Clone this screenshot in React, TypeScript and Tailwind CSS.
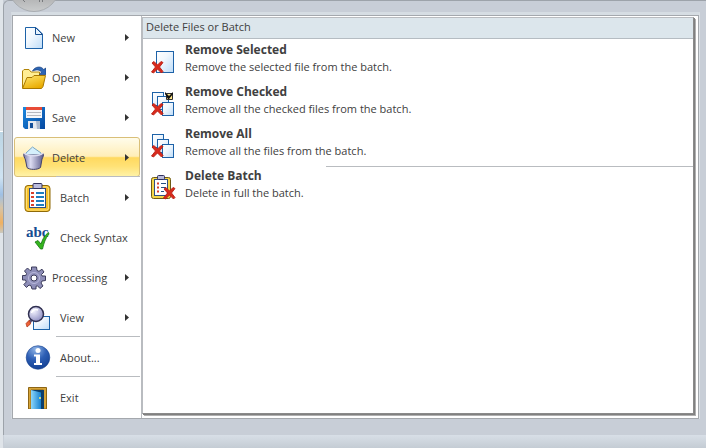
import { ReactNode } from "react";

function Sheet({ x, y, w, h }: { x: number; y: number; w: number; h: number }) {
  return <rect x={x + 0.5} y={y + 0.5} width={w - 1} height={h - 1} fill="url(#paper)" stroke="#1d62a8" />;
}

function Cross({ x, y }: { x: number; y: number }) {
  return (
    <g transform={`translate(${x} ${y})`}>
      <path d="M1 2L3 0.500L6.500 4L10 0.500L12 1.500L8.500 6L12 10.500L10.500 12L6.500 8L2.500 12L0.500 11L4.500 6Z" fill="#d92a1c" stroke="#b81f14" strokeWidth="0.9" />
    </g>
  );
}

function Defs() {
  return (
    <svg className="absolute size-0" aria-hidden="true">
      <defs>
        <linearGradient id="paper" x1="0" y1="0" x2="1" y2="1">
          <stop offset="0" stopColor="#fff" />
          <stop offset="0.4" stopColor="#f2f8fe" />
          <stop offset="1" stopColor="#bddcf8" />
        </linearGradient>
        <linearGradient id="folder" x1="0" y1="0" x2="0.6" y2="1">
          <stop offset="0" stopColor="#ffe873" />
          <stop offset="1" stopColor="#e9ab00" />
        </linearGradient>
        <linearGradient id="disk" x1="0" y1="0" x2="1" y2="1">
          <stop offset="0" stopColor="#1c8ae0" />
          <stop offset="1" stopColor="#0648a0" />
        </linearGradient>
        <linearGradient id="steel" x1="0" y1="0" x2="1" y2="0">
          <stop offset="0" stopColor="#7b7ba6" />
          <stop offset="0.35" stopColor="#dcdcf2" />
          <stop offset="1" stopColor="#5c5c8c" />
        </linearGradient>
        <linearGradient id="door" x1="0" y1="0" x2="1" y2="0">
          <stop offset="0" stopColor="#8bd6fb" />
          <stop offset="1" stopColor="#1680cf" />
        </linearGradient>
        <radialGradient id="info" cx="0.4" cy="0.15" r="0.9">
          <stop offset="0" stopColor="#8fb4e6" />
          <stop offset="0.5" stopColor="#2e5fb5" />
          <stop offset="1" stopColor="#123f91" />
        </radialGradient>
        <radialGradient id="lens" cx="0.35" cy="0.3" r="0.8">
          <stop offset="0" stopColor="#f4f4ff" />
          <stop offset="1" stopColor="#8686bd" />
        </radialGradient>
        <linearGradient id="orb" x1="0" y1="0" x2="0" y2="1">
          <stop offset="0.75" stopColor="#b4b5b6" />
          <stop offset="1" stopColor="#cacccd" />
        </linearGradient>
      </defs>
    </svg>
  );
}

function Clipboard() {
  return (
    <>
      <rect x="1" y="2.500" width="25" height="26" rx="3" fill="#f6c02a" stroke="#8f6a08" />
      <rect x="2.500" y="4" width="22" height="23" rx="2" fill="none" stroke="#ffe27a" />
      <rect x="5.500" y="5.500" width="16" height="19" fill="#fff" stroke="#304f82" />
      <rect x="9" y="0.500" width="9" height="5" rx="1" fill="#b9bbdc" stroke="#31315c" />
      <path d="M7 10h3M7 14h3M7 18h3M7 22h3" stroke="#d9402c" strokeWidth="2" />
      <path d="M12 10h8M12 14h8M12 18h8M12 22h8" stroke="#1e7fc0" strokeWidth="2" />
    </>
  );
}

function SmallClipboard() {
  return (
    <>
      <rect x="0.500" y="2.500" width="19" height="21" rx="2" fill="#f4d548" stroke="#6e5a14" />
      <rect x="3.500" y="4.500" width="13" height="16" fill="#fff" stroke="#304f82" />
      <rect x="6.500" y="0.500" width="7" height="4" rx="1" fill="#b9bbdc" stroke="#31315c" />
      <path d="M6 8.500h2M6 12.500h2M6 16.500h2" stroke="#d9402c" strokeWidth="2" />
      <path d="M10 8.500h5M10 12.500h5M10 16.500h3" stroke="#24507f" />
    </>
  );
}

const icons: Record<string, ReactNode> = {
  New: (
    <svg width="24" height="24" viewBox="0 0 24 24">
      <path d="M3.500 1.500H14L20.500 8V22.500H3.500Z" fill="url(#paper)" stroke="#1d62a8" />
      <path d="M13.500 1.500V8.500H20.500Z" fill="#e7f3fd" stroke="#174f92" />
    </svg>
  ),
  Open: (
    <svg width="24" height="24" viewBox="0 0 24 24">
      <path d="M0.500 22V5L2 3.500H7L9 6H17.500V12" fill="#ffee94" stroke="#b18408" />
      <path d="M0.500 22.500L5 11.500H10L12 9.500H23.500L21 20.500L19.500 22.500Z" fill="url(#folder)" stroke="#a87800" />
      <path d="M10.500 5C13 0 20 0 21.500 3.500L24 2V8.500H17.500L19.500 6C17 3.500 14 3.500 10.500 5Z" fill="#2e66b5" stroke="#183f7c" strokeWidth="0.7" />
    </svg>
  ),
  Save: (
    <svg width="24" height="24" viewBox="0 0 24 24">
      <path d="M1 1H23V23H3L1 21Z" fill="url(#disk)" />
      <path d="M4 1H20V12H4Z" fill="#f4f6fa" />
      <path d="M4 1H20V4H4Z" fill="#e84b37" />
      <path d="M5 6.500H19M5 9.500H19" stroke="#b5b8bf" />
      <path d="M6 15H18V23H6Z" fill="#e6e9ef" />
      <path d="M8 17H11V22H8Z" fill="#144f98" />
      <path d="M14 15H18V23H15Z" fill="#aab8cd" />
    </svg>
  ),
  Delete: (
    <svg width="24" height="26" viewBox="0 0 24 26">
      <path d="M4 8L10.500 2L19 8V12H4Z" fill="#d5effc" stroke="#78a6c4" />
      <path d="M2 8.500C1 11 3 13 3.500 15L5 22.500C7 25 16 25 18.500 22.500L20 14C21 12 22 10 21 8.500L18.500 10H5Z" fill="url(#steel)" stroke="#41416c" />
      <path d="M2 8C5 11.500 18 11.500 21 8" fill="none" stroke="#dcdcf1" strokeWidth="1.500" />
    </svg>
  ),
  Batch: (
    <svg width="27" height="30" viewBox="0 0 27 30"><Clipboard /></svg>
  ),
  "Check Syntax": (
    <svg width="28" height="28" viewBox="0 0 28 28">
      <text x="2" y="13" fontFamily="Liberation Serif, serif" fontWeight="bold" fontSize="15" fill="#164b91">abc</text>
      <path d="M11 18L14 16.500L17 20C19 14 21 11 24.500 8.500L25 10C21 15 20 19 18.500 25H16.500Z" fill="#35b51d" stroke="#137411" strokeWidth="0.8" />
    </svg>
  ),
  Processing: (
    <svg width="24" height="24" viewBox="0 0 24 24">
      <path fillRule="evenodd" d="M9.500 1H14.500L15 4.500L17 5.300L20 3.200L22 6L19.500 8.500L20 10H23.500V14.500L20 15L19 17L21 20L18 22.500L15.500 19.800L14 20.300V23H10L9 19.800L7 19L4.500 21.500L1.800 18.500L4.300 16L3.500 14H0.500V9.500H3.800L4.500 7.500L2.500 5L5.500 2L8 4.500L9.500 4ZM12 9A3 3 0 1 0 12 15A3 3 0 1 0 12 9Z" fill="#8e8eb8" stroke="#3d3d5c" />
      <circle cx="12" cy="12" r="5.500" fill="none" stroke="#b9b9dc" />
    </svg>
  ),
  View: (
    <svg width="26" height="26" viewBox="0 0 26 26">
      <Sheet x={8} y={11} w={17} h={14} />
      <path d="M8 13L3 19" stroke="#55557f" strokeWidth="3" />
      <path d="M4.500 15L1 18.500L2 22L5.500 19Z" fill="#ed6036" stroke="#ad3416" strokeWidth="0.7" />
      <circle cx="11" cy="9" r="7.500" fill="url(#lens)" stroke="#2f2f50" strokeWidth="1.500" />
      <path d="M6.500 8C7 5 10 4 13 5" stroke="#fff" strokeWidth="1.500" fill="none" />
    </svg>
  ),
  "About...": (
    <svg width="26" height="26" viewBox="0 0 26 26">
      <circle cx="13" cy="12.500" r="11.800" fill="url(#info)" stroke="#14408e" strokeWidth="0.6" />
      <circle cx="13" cy="5.500" r="2.500" fill="#fff" />
      <path d="M9 9.500H15V18H17V20H9V18H11V11.500H9Z" fill="#fff" />
    </svg>
  ),
  Exit: (
    <svg width="20" height="22" viewBox="0 0 20 22">
      <path d="M0.500 22V0.500H18.500V22H15.500V3H3V22Z" fill="#d6a438" stroke="#8d6515" />
      <path d="M3 3H16V22H3Z" fill="#0c3e6b" />
      <path d="M3 3L13 5.500V22H3Z" fill="url(#door)" />
      <circle cx="12" cy="11" r="1" fill="#fff36b" />
    </svg>
  ),
};

type Row = { label: string; sub?: boolean; wide?: boolean; ruled?: boolean; active?: boolean };

const rows: Row[] = [
  { label: "New", sub: true },
  { label: "Open", sub: true },
  { label: "Save", sub: true },
  { label: "Delete", sub: true, active: true },
  { label: "Batch", sub: true, wide: true, ruled: true },
  { label: "Check Syntax", wide: true },
  { label: "Processing", sub: true },
  { label: "View", sub: true, wide: true },
  { label: "About...", wide: true, ruled: true },
  { label: "Exit", wide: true, ruled: true },
];

function MenuRow({ label, sub, wide, ruled, active }: Row) {
  return (
    <li className="relative">
      {ruled && <span className="absolute -top-px right-0 left-[42px] h-px bg-[#b9bcc0]" />}
      <button
        type="button"
        className={
          "flex h-10 w-full items-center rounded-[3px] border pt-px pr-[10px] text-left " +
          (active
            ? "border-[#d9bf78] bg-[linear-gradient(#fffceb,#ffeeb8_48%,#ffd95f_52%,#ffe277_75%,#fff2a6)]"
            : "border-transparent")
        }
      >
        <span className={"flex shrink-0 items-center justify-center " + (wide ? "w-[45px]" : "w-[37px]")}>
          {icons[label]}
        </span>
        <span className="grow whitespace-nowrap">{label}</span>
        {sub && (
          <svg width="4" height="7" viewBox="0 0 4 7" className="shrink-0">
            <path d="M0 0L4 3.500L0 7Z" fill="#333" />
          </svg>
        )}
      </button>
    </li>
  );
}

const actions = [
  {
    title: "Remove Selected",
    text: "Remove the selected file from the batch.",
    art: (<><Sheet x={5} y={2} w={18} h={22} /><Cross x={0} y={12} /></>),
  },
  {
    title: "Remove Checked",
    text: "Remove all the checked files from the batch.",
    art: (
      <>
        <Sheet x={1} y={1} w={12} h={14} /><Sheet x={6} y={5} w={12} h={14} /><Sheet x={11} y={11} w={12} h={14} />
        <path d="M15.500 2.500H21.500V8.500H15.500Z" fill="#ffe789" stroke="#303030" />
        <path d="M14 1L18 5L22 1V3L18 8H17L14 3Z" fill="#111" />
        <Cross x={0} y={12} />
      </>
    ),
  },
  {
    title: "Remove All",
    text: "Remove all the files from the batch.",
    art: (
      <>
        <Sheet x={1} y={1} w={12} h={14} /><Sheet x={6} y={6} w={12} h={14} /><Sheet x={11} y={11} w={12} h={14} />
        <Cross x={0} y={12} />
      </>
    ),
  },
  {
    title: "Delete Batch",
    text: "Delete in full the batch.",
    ruled: true,
    art: (<><SmallClipboard /><Cross x={12} y={12} /></>),
  },
];

export default function App() {
  return (
    <main className="relative flex min-h-screen overflow-hidden bg-[#c8ced7] font-['Open_Sans','Noto_Sans',sans-serif] text-[11px] leading-4 text-[#404040]">
      <Defs />
      <div className="flex w-[3px] shrink-0 flex-col bg-[#dfe4e9]">
        <span className="mt-[131px] h-[102px] border-t border-white bg-[linear-gradient(#bcd5e4,#cfe3f2_45%,#9fc0e4_62%,#d6c4a8_75%,#f0b060_90%,#c9c9c0)]" />
      </div>
      <div className="flex grow flex-col">
        <div className="flex grow flex-col rounded-tl-md border-t border-l border-[#9da3aa] pt-[11px] pr-[6px] pl-[7px]">
          <div className="border-t-[3px] border-r border-l border-t-[#d6dde3] border-r-[#dde2e7] border-l-[#d2d8df]">
            <div className="flex border border-[#a4a8ad] bg-white">
              <nav aria-label="Application menu" className="w-[129px] shrink-0 border-r border-[#b9bcc0] py-px pr-px pl-px">
                <ul>{rows.map((r) => <MenuRow key={r.label} {...r} />)}</ul>
              </nav>
              <section className="mt-px mr-1 mb-1 grow border border-[#b9bcc0] border-r-[#8a8a8a] border-b-[#8a8a8a] shadow-[1px_1px_0_#808080,2px_2px_0_#b0b0b0]">
                <h1 className="border-b border-[#b5bcc2] bg-[#dce6ec] px-[3px] pt-px pb-[3px]">Delete Files or Batch</h1>
                <ul>
                  {actions.map((a) => (
                    <li key={a.title} className="relative h-[42px]">
                      {a.ruled && <span className="absolute top-px right-0 left-[183px] h-px bg-[#b9bcc0]" />}
                      <button type="button" className="flex w-full gap-[9px] pt-[2px] pl-2 text-left">
                        <svg width="25" height="26" viewBox="0 0 25 26" className="mt-2 shrink-0">{a.art}</svg>
                        <span>
                          <span className="block text-[12px] leading-[17px] font-bold">{a.title}</span>
                          <span className="block leading-[17px]">{a.text}</span>
                        </span>
                      </button>
                    </li>
                  ))}
                </ul>
              </section>
            </div>
          </div>
        </div>
        <footer className="ml-px h-[13px] bg-linear-to-b from-[#d8dfe7] to-[#c4ccd4]" />
      </div>
      <svg width="48" height="13" viewBox="0 0 48 13" className="absolute top-0 left-[10px]" aria-hidden="true">
        <circle cx="24" cy="-14" r="25.500" fill="url(#orb)" stroke="#a9adb1" />
        <path d="M13 0L15 2M29.500 0V2M32.500 0V2" stroke="#77797c" />
      </svg>
    </main>
  );
}
